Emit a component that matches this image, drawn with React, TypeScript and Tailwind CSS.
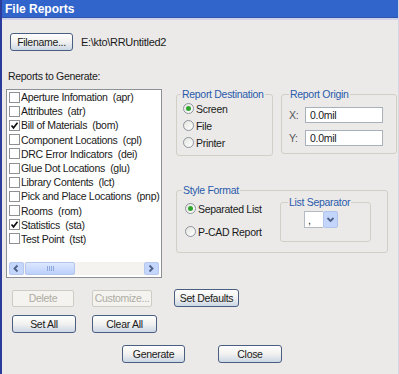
import React from "react";

const items: [string, string, boolean][] = [
  ["Aperture Infomation", "apr", false],
  ["Attributes", "atr", false],
  ["Bill of Materials", "bom", true],
  ["Component Locations", "cpl", false],
  ["DRC Error Indicators", "dei", false],
  ["Glue Dot Locations", "glu", false],
  ["Library Contents", "lct", false],
  ["Pick and Place Locations", "pnp", false],
  ["Rooms", "rom", false],
  ["Statistics", "sta", true],
  ["Test Point", "tst", false],
];

function Check({ on }: { on: boolean }) {
  return (
    <span className="flex h-[11px] w-[11px] shrink-0 items-center justify-center border border-[#8e9093] bg-white">
      {on && (
        <svg width="9" height="9" viewBox="0 0 9 9">
          <path d="M1.5 4.5 L3.5 6.8 L7.5 1.8" fill="none" stroke="#111" strokeWidth="1.7" />
        </svg>
      )}
    </span>
  );
}

function Radio({ on }: { on: boolean }) {
  return (
    <span className="flex h-[11px] w-[11px] shrink-0 items-center justify-center rounded-full border border-[#8d949c] bg-linear-to-br from-[#e4e4e0] to-white">
      {on && <span className="h-[5px] w-[5px] rounded-full bg-[#2fa52f]" />}
    </span>
  );
}

function Chevron({ dir }: { dir: "left" | "right" | "down" }) {
  const d =
    dir === "left" ? "M5.5 1.5 L2.5 4.5 L5.5 7.5" : dir === "right" ? "M2.5 1.5 L5.5 4.5 L2.5 7.5" : "M1.5 3 L4.5 6 L7.5 3";
  return (
    <svg width="9" height="9" viewBox="0 0 9 9">
      <path d={d} fill="none" stroke="#4d6185" strokeWidth="1.8" />
    </svg>
  );
}

const btn =
  "flex h-[18px] items-center justify-center rounded-[3px] border border-[#4a5f80] bg-linear-to-b from-white via-[#f1f1ef] to-[#cdd7e6] text-[#1a1a1a]";
const dis =
  "flex h-[17px] items-center justify-center rounded-[2px] border border-[#cfcdc3] bg-[#f4f3ef] text-[#aeaca2]";

export default function App() {
  return (
    <div
      className="relative flex h-[374px] w-[399px] flex-col overflow-hidden border-l-2 border-r border-l-[#2b3c9c] border-r-[#d4d6e2] bg-[#ebeae9] text-[10.5px] leading-[12px] text-[#1a1a1a] tracking-[-0.3px]"
      style={{ fontFamily: '"Liberation Sans", Arial, sans-serif' }}
    >
      {/* title bar */}
      <div className="flex h-[17px] shrink-0 items-center bg-[#3265cb] pl-[3px]">
        <span className="text-[12px] font-bold tracking-normal text-white">File Reports</span>
      </div>
      <div className="h-[1px] shrink-0 bg-[#2f55a8]" />
      <div className="h-[2px] shrink-0 bg-[#d0d3ea]" />

      {/* filename row */}
      <div className="mt-[13px] flex items-center">
        <button className={btn + " ml-[8px] w-[63px]"}>Filename...</button>
        <span className="ml-[8px] text-[11px]">E:\kto\RRUntitled2</span>
      </div>

      <div className="ml-[6px] mt-[19px] h-[13px] leading-[13px]">Reports to Generate:</div>

      {/* main row */}
      <div className="mt-[5px] flex items-start">
        {/* list box */}
        <div className="ml-[4px] mt-[1px] flex h-[189px] w-[156px] flex-col border border-[#8c9198] bg-white">
          <div className="flex flex-1 flex-col pl-[2px]">
            {items.map(([n, c, on]) => (
              <div key={c} className="flex h-[14.2px] items-center gap-[1px] whitespace-pre">
                <Check on={on} />
                <span>
                  {n}
                  {"  "}({c})
                </span>
              </div>
            ))}
          </div>
          <div className="mx-[2px] mb-[2px] flex h-[13px] items-stretch bg-[#f4f3ef]">
            <div className="flex w-[15px] items-center justify-center rounded-[2px] border border-[#b7c8ee] bg-[#c5d6fc]">
              <Chevron dir="left" />
            </div>
            <div className="ml-[1px] flex w-[50px] items-center justify-center gap-[1px] rounded-[2px] border border-[#b5c6ee] bg-linear-to-b from-[#dde8fe] to-[#bcd0fb]">
              <span className="h-[5px] w-[1px] bg-[#8ea8dc]" />
              <span className="h-[5px] w-[1px] bg-[#8ea8dc]" />
              <span className="h-[5px] w-[1px] bg-[#8ea8dc]" />
              <span className="h-[5px] w-[1px] bg-[#8ea8dc]" />
            </div>
            <div className="flex-1" />
            <div className="flex w-[15px] items-center justify-center rounded-[2px] border border-[#b7c8ee] bg-[#c5d6fc]">
              <Chevron dir="right" />
            </div>
          </div>
        </div>

        {/* right column */}
        <div className="ml-[14px] flex flex-col">
          <div className="flex items-start">
            <fieldset className="h-[68px] w-[97px] rounded-[3px] border border-[#d2d0c6] p-0">
              <legend className="ml-[4px] px-[1px] text-[#2a5aaa]">Report Destination</legend>
              <div className="flex flex-col pl-[6px]">
                {[
                  ["Screen", true],
                  ["File", false],
                  ["Printer", false],
                ].map(([l, on]) => (
                  <div key={l as string} className="flex h-[17px] items-center gap-[2px]">
                    <Radio on={on as boolean} />
                    <span>{l as string}</span>
                  </div>
                ))}
              </div>
            </fieldset>
            <fieldset className="ml-[8px] h-[66px] w-[116px] rounded-[3px] border border-[#d2d0c6] p-0">
              <legend className="ml-[7px] px-[1px] text-[#2a5aaa]">Report Origin</legend>
              <div className="mt-[7px] flex flex-col gap-[7px] pl-[7px]">
                <div className="flex items-center">
                  <span className="w-[16px] text-[#555]">X:</span>
                  <div className="flex h-[16px] w-[78px] items-center border border-[#a8b0ba] bg-white pl-[4px]">
                    0.0mil
                  </div>
                </div>
                <div className="flex items-center">
                  <span className="w-[16px] text-[#555]">Y:</span>
                  <div className="flex h-[16px] w-[78px] items-center border border-[#a8b0ba] bg-white pl-[4px]">
                    0.0mil
                  </div>
                </div>
              </div>
            </fieldset>
          </div>

          <fieldset className="mt-[28px] h-[69px] w-[212px] rounded-[3px] border border-[#d2d0c6] p-0">
            <legend className="ml-[5px] px-[1px] text-[#2a5aaa]">Style Format</legend>
            <div className="flex items-start">
              <div className="mt-[4px] flex w-[103px] flex-col gap-[6px] pl-[8px]">
                <div className="flex h-[17px] items-center gap-[2px]">
                  <Radio on={true} />
                  <span>Separated List</span>
                </div>
                <div className="flex h-[17px] items-center gap-[2px]">
                  <Radio on={false} />
                  <span>P-CAD Report</span>
                </div>
              </div>
              <fieldset className="h-[46px] w-[91px] rounded-[3px] border border-[#d2d0c6] p-0">
                <legend className="ml-[7px] px-[1px] text-[#2a5aaa]">List Separator</legend>
                <div className="mt-[3px] flex pl-[23px]">
                  <div className="flex h-[17px] w-[19px] items-center border border-r-0 border-[#b3bac4] bg-white pl-[3px]">
                    ,
                  </div>
                  <div className="flex h-[17px] w-[15px] items-center justify-center rounded-[2px] border border-[#b0c4ee] bg-[#c3d5fb]">
                    <Chevron dir="down" />
                  </div>
                </div>
              </fieldset>
            </div>
          </fieldset>
        </div>
      </div>

      {/* button rows */}
      <div className="mt-[11px] flex items-center pl-[10px]">
        <button className={dis + " w-[62px]"}>Delete</button>
        <button className={dis + " ml-[18px] w-[60px]"}>Customize...</button>
        <button className={btn + " ml-[22px] w-[65px]"}>Set Defaults</button>
      </div>
      <div className="mt-[8px] flex items-center pl-[10px]">
        <button className={btn + " w-[64px]"}>Set All</button>
        <button className={btn + " ml-[16px] w-[65px]"}>Clear All</button>
      </div>
      <div className="mt-[12px] flex items-center pl-[120px]">
        <button className={btn + " w-[63px]"}>Generate</button>
        <button className={btn + " ml-[33px] w-[64px]"}>Close</button>
      </div>
    </div>
  );
}
